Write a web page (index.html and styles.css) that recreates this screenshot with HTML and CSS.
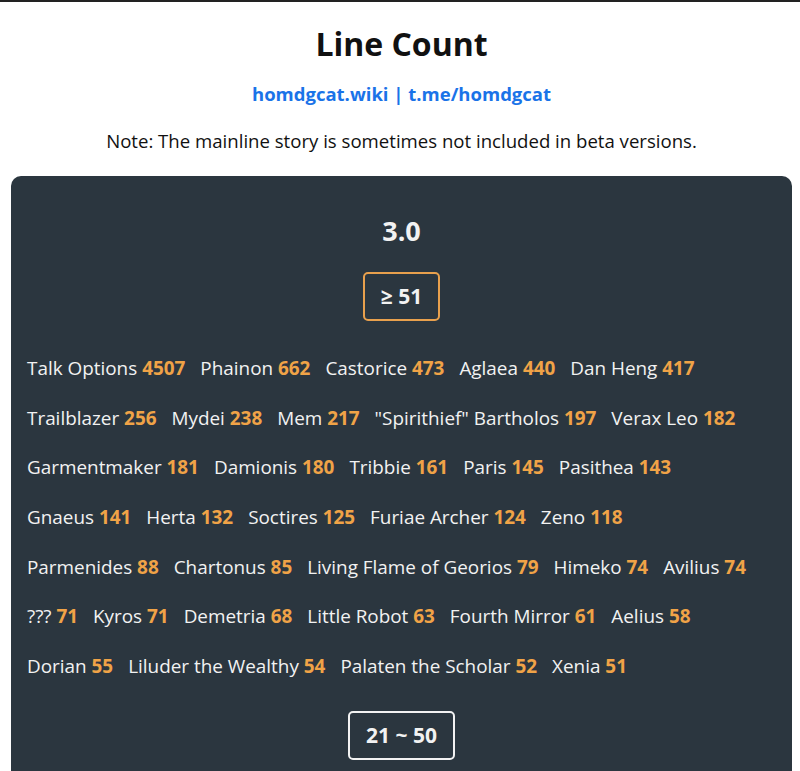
FILE: index.html
```html
<!DOCTYPE html>
<html lang="en">
<head>
    <meta charset="UTF-8">
    <meta name="viewport" content="width=device-width, initial-scale=1.0">
    <title>Line Count</title>
    <link rel="stylesheet" href="styles.css">
</head>
<body>
    <h1>Line Count</h1>
    <p class="links"><a href="#">homdgcat.wiki</a> | <a href="#">t.me/homdgcat</a></p>
    <p class="note">Note: The mainline story is sometimes not included in beta versions.</p>

    <div class="version-card">
        <h2>3.0</h2>
        <div class="tier-wrap"><span class="tier tier-top">&ge; 51</span></div>
        <div class="speakers">
            <span class="speaker">Talk Options <b>4507</b></span>
            <span class="speaker">Phainon <b>662</b></span>
            <span class="speaker">Castorice <b>473</b></span>
            <span class="speaker">Aglaea <b>440</b></span>
            <span class="speaker">Dan Heng <b>417</b></span>
            <span class="speaker">Trailblazer <b>256</b></span>
            <span class="speaker">Mydei <b>238</b></span>
            <span class="speaker">Mem <b>217</b></span>
            <span class="speaker">"Spirithief" Bartholos <b>197</b></span>
            <span class="speaker">Verax Leo <b>182</b></span>
            <span class="speaker">Garmentmaker <b>181</b></span>
            <span class="speaker">Damionis <b>180</b></span>
            <span class="speaker">Tribbie <b>161</b></span>
            <span class="speaker">Paris <b>145</b></span>
            <span class="speaker">Pasithea <b>143</b></span>
            <span class="speaker">Gnaeus <b>141</b></span>
            <span class="speaker">Herta <b>132</b></span>
            <span class="speaker">Soctires <b>125</b></span>
            <span class="speaker">Furiae Archer <b>124</b></span>
            <span class="speaker">Zeno <b>118</b></span>
            <span class="speaker">Parmenides <b>88</b></span>
            <span class="speaker">Chartonus <b>85</b></span>
            <span class="speaker">Living Flame of Georios <b>79</b></span>
            <span class="speaker">Himeko <b>74</b></span>
            <span class="speaker">Avilius <b>74</b></span>
            <span class="speaker">??? <b>71</b></span>
            <span class="speaker">Kyros <b>71</b></span>
            <span class="speaker">Demetria <b>68</b></span>
            <span class="speaker">Little Robot <b>63</b></span>
            <span class="speaker">Fourth Mirror <b>61</b></span>
            <span class="speaker">Aelius <b>58</b></span>
            <span class="speaker">Dorian <b>55</b></span>
            <span class="speaker">Liluder the Wealthy <b>54</b></span>
            <span class="speaker">Palaten the Scholar <b>52</b></span>
            <span class="speaker">Xenia <b>51</b></span>
        </div>
        <div class="tier-wrap tier-next"><span class="tier">21 ~ 50</span></div>
    </div>
</body>
</html>
```

FILE: styles.css
```css
body {
    font-family: "Open Sans", "Noto Sans", sans-serif;
    background-color: #ffffff;
    color: #111111;
    margin: 0;
    padding: 0 8px 0 11px;
    border-top: 2px solid #222222;
    text-align: center;
}
h1 {
    font-size: 32px;
    font-weight: 700;
    margin: 22px 0 0;
    line-height: 40px;
}
.links {
    font-size: 18.5px;
    font-weight: 700;
    color: #1a73e8;
    margin: 16px 0 0;
    line-height: 28px;
}
.links a {
    color: #1a73e8;
    text-decoration: none;
}
.note {
    font-size: 18.6px;
    margin: 19px 0 0;
    line-height: 28px;
}
.version-card {
    background-color: #2b363f;
    color: #f2f2f2;
    border-radius: 10px;
    margin-top: 21px;
    padding: 35px 32px 40px 16px;
    text-align: left;
}
.version-card h2 {
    text-align: center;
    font-size: 27px;
    font-weight: 700;
    margin: 0 -16px 0 0;
    line-height: 40px;
}
.tier-wrap {
    text-align: center;
    margin: 21px -16px 0 0;
}
.tier {
    display: inline-block;
    border: 2px solid #f2f2f2;
    border-radius: 5px;
    padding: 0 16px;
    font-size: 21px;
    font-weight: 700;
    line-height: 45px;
}
.tier-top {
    border-color: #e8a04d;
}
.speakers {
    display: flex;
    flex-wrap: wrap;
    column-gap: 15px;
    row-gap: 19.7px;
    margin-top: 32px;
    font-size: 18.9px;
    line-height: 30px;
}
.speaker b {
    color: #f0a347;
    font-weight: 700;
}
.tier-next {
    margin-top: 30px;
}
```
